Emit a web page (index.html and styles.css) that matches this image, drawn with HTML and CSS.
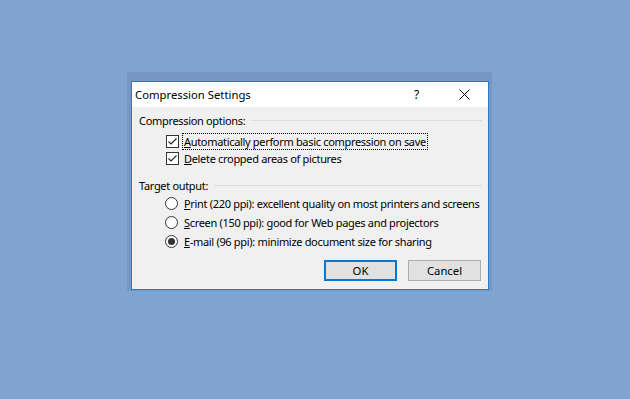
FILE: index.html
```
<!DOCTYPE html>
<html>
<head>
<meta charset="utf-8">
<title>Compression Settings</title>
<link rel="stylesheet" href="styles.css">
</head>
<body>

<div class="frame">
    <div class="dialog">

        <div class="titlebar">
            <span class="title">Compression Settings</span>
            <span class="help">?</span>
            <span class="close">
                <svg width="11" height="11" viewBox="0 0 11 11"><path d="M0.5 0.5L10.5 10.5M10.5 0.5L0.5 10.5" stroke="#000" stroke-width="1" fill="none"/></svg>
            </span>
        </div>

        <div class="body">

            <div class="group-head first">
                <span>Compression options:</span>
                <div class="rule"></div>
            </div>

            <div class="row check-row">
                <span class="check">
                    <svg width="13" height="13" viewBox="0 0 13 13"><rect x="0.5" y="0.5" width="12" height="12" fill="#fff" stroke="#333"/><path d="M2.5 6.5L5 9L10.5 3.5" stroke="#222" stroke-width="1.1" fill="none"/></svg>
                </span>
                <span class="label focused"><u>A</u>utomatically perform basic compression on save</span>
            </div>
            <div class="row check-row">
                <span class="check">
                    <svg width="13" height="13" viewBox="0 0 13 13"><rect x="0.5" y="0.5" width="12" height="12" fill="#fff" stroke="#333"/><path d="M2.5 6.5L5 9L10.5 3.5" stroke="#222" stroke-width="1.1" fill="none"/></svg>
                </span>
                <span class="label"><u>D</u>elete cropped areas of pictures</span>
            </div>

            <div class="group-head">
                <span>Target output:</span>
                <div class="rule"></div>
            </div>

            <div class="row radio-row">
                <span class="radio"></span>
                <span class="label"><u>P</u>rint (220 ppi): excellent quality on most printers and screens</span>
            </div>
            <div class="row radio-row">
                <span class="radio"></span>
                <span class="label"><u>S</u>creen (150 ppi): good for Web pages and projectors</span>
            </div>
            <div class="row radio-row">
                <span class="radio on"></span>
                <span class="label"><u>E</u>-mail (96 ppi): minimize document size for sharing</span>
            </div>

            <div class="buttons">
                <button class="btn default">OK</button>
                <button class="btn">Cancel</button>
            </div>

        </div>
    </div>
</div>

</body>
</html>
```

FILE: styles.css
```
body {
    margin: 0;
    width: 630px;
    height: 399px;
    overflow: hidden;
    background: #81a3d0;
    font-family: "Noto Sans", "Open Sans", sans-serif;
    font-size: 11px;
    letter-spacing: -0.32px;
    color: #000;
}

/* soft shadow band round the window */
.frame {
    width: 358px;
    margin: 72px 0 0 127px;
    padding: 9px 3px 1px 4px;
    background: #7696c3;
}

.dialog {
    border: 1px solid #1c7fd4;
    background: #f0f0f0;
}

.titlebar {
    display: flex;
    align-items: center;
    height: 25px;
    padding-left: 3px;
    background: #fff;
}

.title {
    flex-grow: 1;
    font-size: 11.3px;
    letter-spacing: 0;
}

.help {
    width: 12px;
    margin-right: 33px;
    font-size: 12px;
}

.close {
    display: flex;
    width: 11px;
    margin-right: 18px;
}

.body {
    display: flex;
    flex-direction: column;
    height: 182px;
    padding: 0 6px 0 7px;
    box-sizing: border-box;
}

.group-head {
    display: flex;
    align-items: center;
    height: 17px;
    margin-top: 10px;
}

.group-head.first {
    height: 16px;
    margin-top: 5px;
    margin-bottom: 5px;
}

.rule {
    flex-grow: 1;
    height: 1px;
    margin-left: 6px;
    background: #dcdcdc;
}

.row {
    display: flex;
    align-items: center;
    padding-left: 27px;
}

.check-row {
    height: 17px;
}

.radio-row {
    height: 19px;
    padding-left: 26px;
}

.check {
    display: flex;
    flex-shrink: 0;
    width: 13px;
    height: 13px;
    margin-right: 5px;
}

.radio {
    flex-shrink: 0;
    width: 11px;
    height: 11px;
    border: 1px solid #333;
    border-radius: 50%;
    background: #fff;
    margin-right: 6px;
    display: flex;
    align-items: center;
    justify-content: center;
}

.radio.on:before {
    content: "";
    width: 7px;
    height: 7px;
    border-radius: 50%;
    background: #333;
}

.label {
    white-space: nowrap;
    line-height: 15px;
}

.label.focused {
    outline: 1px dotted #000;
    outline-offset: 0;
    padding: 0 1px;
    margin-left: -1px;
}

.buttons {
    display: flex;
    justify-content: flex-end;
    gap: 11px;
    margin-top: 9px;
    padding-right: 1px;
}

.btn {
    width: 73px;
    height: 21px;
    box-sizing: border-box;
    border: 1px solid #adadad;
    background: #e1e1e1;
    font-family: inherit;
    font-size: 11.3px;
    letter-spacing: 0;
    color: #000;
    padding: 0;
}

.btn.default {
    border: 2px solid #0078d7;
}
```
